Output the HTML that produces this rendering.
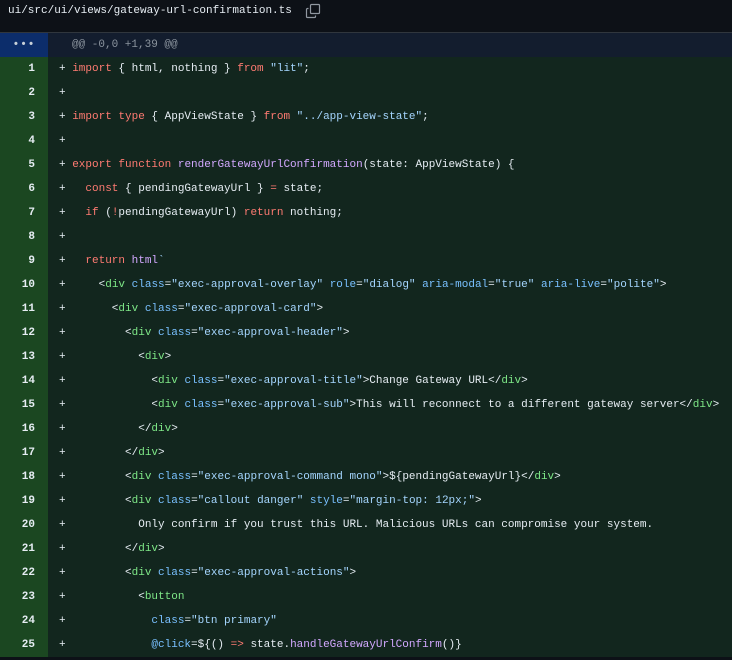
<!DOCTYPE html>
<html><head><style>
body{margin:0;width:732px;height:660px;overflow:hidden;background:#0d1117;font-family:"Liberation Mono",monospace;}
.hdr{height:32px;border-bottom:1px solid #30363d;color:#e6edf3;font-size:11px;line-height:22px;padding-left:8px;position:relative}
.cp{position:absolute;left:305px;top:3px}
.row{height:24px;display:flex;font-size:11px;line-height:24px;white-space:pre}
.g{width:48px;flex:none;text-align:right;box-sizing:border-box;padding-right:13px;color:#e6edf3;font-weight:bold}
.c{flex:1;color:#e6edf3}
.hunk .g{background:#0c2d6b;color:#c9d1d9;text-align:center;padding:0;letter-spacing:1px}
.hunk .c{background:#131d2e;color:#8b949e;padding-left:24px}
.add .g{background:#1b4721}
.add .c{background:#12261e;padding-left:11px}
.k{color:#ff7b72}.s{color:#a5d6ff}.t{color:#7ee787}.a{color:#79c0ff}.f{color:#d2a8ff}
</style></head><body>
<div class="hdr">ui/src/ui/views/gateway-url-confirmation.ts<svg class="cp" width="16" height="16" viewBox="0 0 16 16" fill="none" stroke="#9198a1" stroke-width="1.2"><rect x="5.5" y="1.5" width="9" height="9" rx="1"/><path d="M3.5 5.5h-1a1 1 0 0 0-1 1v7a1 1 0 0 0 1 1h7a1 1 0 0 0 1-1v-1"/></svg></div>
<div class="row hunk"><div class="g">•••</div><div class="c">@@ -0,0 +1,39 @@</div></div>
<div class="row add"><div class="g">1</div><div class="c">+ <span class="k">import</span> { html, nothing } <span class="k">from</span> <span class="s">"lit"</span>;</div></div>
<div class="row add"><div class="g">2</div><div class="c">+</div></div>
<div class="row add"><div class="g">3</div><div class="c">+ <span class="k">import</span> <span class="k">type</span> { AppViewState } <span class="k">from</span> <span class="s">"../app-view-state"</span>;</div></div>
<div class="row add"><div class="g">4</div><div class="c">+</div></div>
<div class="row add"><div class="g">5</div><div class="c">+ <span class="k">export</span> <span class="k">function</span> <span class="f">renderGatewayUrlConfirmation</span>(state: AppViewState) {</div></div>
<div class="row add"><div class="g">6</div><div class="c">+   <span class="k">const</span> { pendingGatewayUrl } <span class="k">=</span> state;</div></div>
<div class="row add"><div class="g">7</div><div class="c">+   <span class="k">if</span> (<span class="k">!</span>pendingGatewayUrl) <span class="k">return</span> nothing;</div></div>
<div class="row add"><div class="g">8</div><div class="c">+</div></div>
<div class="row add"><div class="g">9</div><div class="c">+   <span class="k">return</span> <span class="f">html</span><span class="s">`</span></div></div>
<div class="row add"><div class="g">10</div><div class="c">+     &lt;<span class="t">div</span> <span class="a">class</span>=<span class="s">"exec-approval-overlay"</span> <span class="a">role</span>=<span class="s">"dialog"</span> <span class="a">aria-modal</span>=<span class="s">"true"</span> <span class="a">aria-live</span>=<span class="s">"polite"</span>&gt;</div></div>
<div class="row add"><div class="g">11</div><div class="c">+       &lt;<span class="t">div</span> <span class="a">class</span>=<span class="s">"exec-approval-card"</span>&gt;</div></div>
<div class="row add"><div class="g">12</div><div class="c">+         &lt;<span class="t">div</span> <span class="a">class</span>=<span class="s">"exec-approval-header"</span>&gt;</div></div>
<div class="row add"><div class="g">13</div><div class="c">+           &lt;<span class="t">div</span>&gt;</div></div>
<div class="row add"><div class="g">14</div><div class="c">+             &lt;<span class="t">div</span> <span class="a">class</span>=<span class="s">"exec-approval-title"</span>&gt;Change Gateway URL&lt;/<span class="t">div</span>&gt;</div></div>
<div class="row add"><div class="g">15</div><div class="c">+             &lt;<span class="t">div</span> <span class="a">class</span>=<span class="s">"exec-approval-sub"</span>&gt;This will reconnect to a different gateway server&lt;/<span class="t">div</span>&gt;</div></div>
<div class="row add"><div class="g">16</div><div class="c">+           &lt;/<span class="t">div</span>&gt;</div></div>
<div class="row add"><div class="g">17</div><div class="c">+         &lt;/<span class="t">div</span>&gt;</div></div>
<div class="row add"><div class="g">18</div><div class="c">+         &lt;<span class="t">div</span> <span class="a">class</span>=<span class="s">"exec-approval-command mono"</span>&gt;${pendingGatewayUrl}&lt;/<span class="t">div</span>&gt;</div></div>
<div class="row add"><div class="g">19</div><div class="c">+         &lt;<span class="t">div</span> <span class="a">class</span>=<span class="s">"callout danger"</span> <span class="a">style</span>=<span class="s">"margin-top: 12px;"</span>&gt;</div></div>
<div class="row add"><div class="g">20</div><div class="c">+           Only confirm if you trust this URL. Malicious URLs can compromise your system.</div></div>
<div class="row add"><div class="g">21</div><div class="c">+         &lt;/<span class="t">div</span>&gt;</div></div>
<div class="row add"><div class="g">22</div><div class="c">+         &lt;<span class="t">div</span> <span class="a">class</span>=<span class="s">"exec-approval-actions"</span>&gt;</div></div>
<div class="row add"><div class="g">23</div><div class="c">+           &lt;<span class="t">button</span></div></div>
<div class="row add"><div class="g">24</div><div class="c">+             <span class="a">class</span>=<span class="s">"btn primary"</span></div></div>
<div class="row add"><div class="g">25</div><div class="c">+             <span class="a">@click</span>=${() <span class="k">=&gt;</span> state.<span class="f">handleGatewayUrlConfirm</span>()}</div></div>
</body></html>
